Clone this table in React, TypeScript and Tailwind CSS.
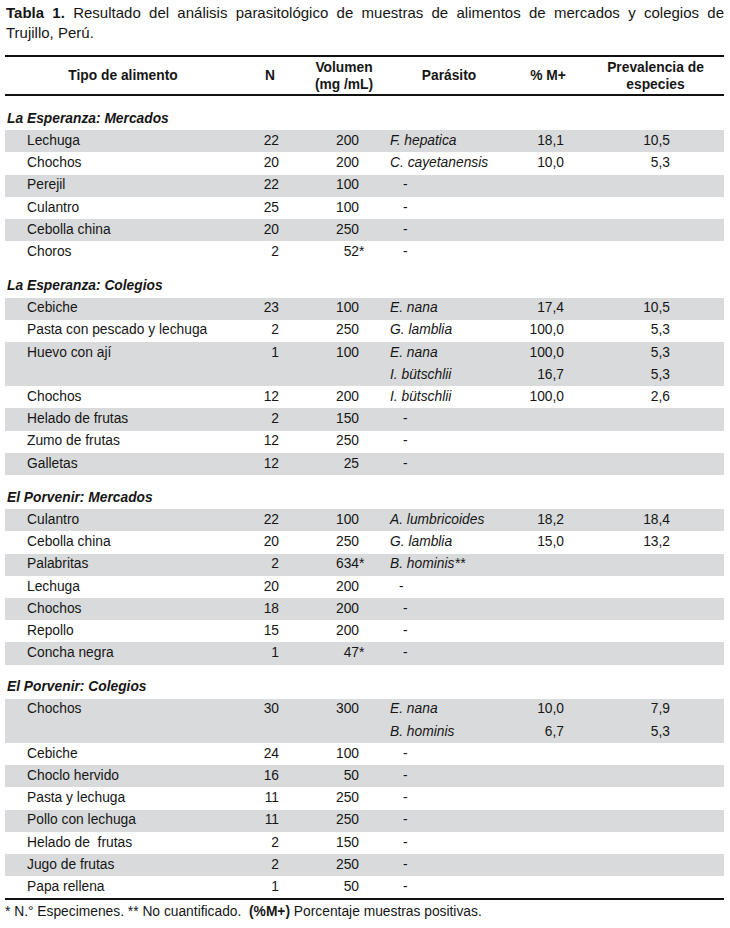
import React from "react";

type Line = [string, string?, string?];
type Row = { name: string; n: string; v: string; p: Line[]; dashShift?: boolean };
type Section = { title: string; rows: Row[] };

const sections: Section[] = [
  {
    title: "La Esperanza: Mercados",
    rows: [
      { name: "Lechuga", n: "22", v: "200", p: [["F. hepatica", "18,1", "10,5"]] },
      { name: "Chochos", n: "20", v: "200", p: [["C. cayetanensis", "10,0", "5,3"]] },
      { name: "Perejil", n: "22", v: "100", p: [["-"]] },
      { name: "Culantro", n: "25", v: "100", p: [["-"]] },
      { name: "Cebolla china", n: "20", v: "250", p: [["-"]] },
      { name: "Choros", n: "2", v: "52*", p: [["-"]] },
    ],
  },
  {
    title: "La Esperanza: Colegios",
    rows: [
      { name: "Cebiche", n: "23", v: "100", p: [["E. nana", "17,4", "10,5"]] },
      { name: "Pasta con pescado y lechuga", n: "2", v: "250", p: [["G. lamblia", "100,0", "5,3"]] },
      {
        name: "Huevo con ají",
        n: "1",
        v: "100",
        p: [
          ["E. nana", "100,0", "5,3"],
          ["I. bütschlii", "16,7", "5,3"],
        ],
      },
      { name: "Chochos", n: "12", v: "200", p: [["I. bütschlii", "100,0", "2,6"]] },
      { name: "Helado de frutas", n: "2", v: "150", p: [["-"]] },
      { name: "Zumo de frutas", n: "12", v: "250", p: [["-"]] },
      { name: "Galletas", n: "12", v: "25", p: [["-"]] },
    ],
  },
  {
    title: "El Porvenir: Mercados",
    rows: [
      { name: "Culantro", n: "22", v: "100", p: [["A. lumbricoides", "18,2", "18,4"]] },
      { name: "Cebolla china", n: "20", v: "250", p: [["G. lamblia", "15,0", "13,2"]] },
      { name: "Palabritas", n: "2", v: "634*", p: [["B. hominis**"]] },
      { name: "Lechuga", n: "20", v: "200", p: [["-"]], dashShift: true },
      { name: "Chochos", n: "18", v: "200", p: [["-"]] },
      { name: "Repollo", n: "15", v: "200", p: [["-"]] },
      { name: "Concha negra", n: "1", v: "47*", p: [["-"]] },
    ],
  },
  {
    title: "El Porvenir: Colegios",
    rows: [
      {
        name: "Chochos",
        n: "30",
        v: "300",
        p: [
          ["E. nana", "10,0", "7,9"],
          ["B. hominis", "6,7", "5,3"],
        ],
      },
      { name: "Cebiche", n: "24", v: "100", p: [["-"]] },
      { name: "Choclo hervido", n: "16", v: "50", p: [["-"]] },
      { name: "Pasta y lechuga", n: "11", v: "250", p: [["-"]] },
      { name: "Pollo con lechuga", n: "11", v: "250", p: [["-"]] },
      { name: "Helado de  frutas", n: "2", v: "150", p: [["-"]] },
      { name: "Jugo de frutas", n: "2", v: "250", p: [["-"]] },
      { name: "Papa rellena", n: "1", v: "50", p: [["-"]] },
    ],
  },
];

function Vol({ v }: { v: string }) {
  if (v.endsWith("*")) {
    return (
      <span>
        {v.slice(0, -1)}
        <span className="inline-block w-0">*</span>
      </span>
    );
  }
  return <span>{v}</span>;
}

function DataRow({ row, gray }: { row: Row; gray: boolean }) {
  return (
    <div
      className={`grid grid-cols-[236px_43px_86px_110px_100px_144px] ${
        gray ? "bg-[#d9dadb]" : ""
      }`}
    >
      <div className="h-[22.2px] flex items-center pl-[22px] whitespace-pre">{row.name}</div>
      <div className="h-[22.2px] flex items-center justify-end pr-[5px]">{row.n}</div>
      <div className="h-[22.2px] flex items-center justify-end pr-[11px]">
        <Vol v={row.v} />
      </div>
      <div className="flex flex-col">
        {row.p.map((l, i) =>
          l[0] === "-" ? (
            <div
              key={i}
              className={`h-[22.2px] flex items-center ${row.dashShift ? "pl-[29px]" : "pl-[33px]"}`}
            >
              -
            </div>
          ) : (
            <div key={i} className="h-[22.2px] flex items-center pl-[20px] italic whitespace-nowrap">
              {l[0]}
            </div>
          )
        )}
      </div>
      <div className="flex flex-col">
        {row.p.map((l, i) => (
          <div key={i} className="h-[22.2px] flex items-center justify-end pr-[16px]">
            {l[1] ?? ""}
          </div>
        ))}
      </div>
      <div className="flex flex-col">
        {row.p.map((l, i) => (
          <div key={i} className="h-[22.2px] flex items-center justify-end pr-[54px]">
            {l[2] ?? ""}
          </div>
        ))}
      </div>
    </div>
  );
}

export default function App() {
  return (
    <div className="w-[730px] h-[928px] bg-white text-[#161616] font-['Liberation_Sans',Arial,sans-serif] overflow-hidden">
      <div className="pt-[3px] pl-[6px] w-[724px] text-[15px] leading-[20px]">
        <div className="[text-align-last:justify] whitespace-nowrap">
          <span className="font-bold">Tabla 1.</span> Resultado del análisis parasitológico de muestras de alimentos de mercados y colegios de
        </div>
        <div>Trujillo, Perú.</div>
      </div>

      <div className="ml-[5px] w-[719px] mt-[12px] text-[13.8px]">
        <div className="border-t-2 border-b-2 border-[#111] h-[41px] grid grid-cols-[236px_58px_90px_120px_78px_137px] font-bold leading-[17px]">
          <div className="flex items-center justify-center whitespace-nowrap">Tipo de alimento</div>
          <div className="flex items-center justify-center">N</div>
          <div className="flex flex-col items-center justify-center whitespace-nowrap">
            <span>Volumen</span>
            <span>(mg /mL)</span>
          </div>
          <div className="flex items-center justify-center">Parásito</div>
          <div className="flex items-center justify-center whitespace-nowrap">% M+</div>
          <div className="flex flex-col items-center justify-center whitespace-nowrap">
            <span>Prevalencia de</span>
            <span>especies</span>
          </div>
        </div>

        {sections.map((s, si) => (
          <div key={si} className="pt-[12px]">
            <div className="h-[22.2px] flex items-center pl-[2px] font-bold italic">{s.title}</div>
            {s.rows.map((r, ri) => (
              <DataRow key={ri} row={r} gray={ri % 2 === 0} />
            ))}
          </div>
        ))}

        <div className="border-t-2 border-[#111]" />
        <div className="h-[24px] flex items-center whitespace-pre">
          * N.° Especimenes. ** No cuantificado.  <span className="font-bold">(%M+)</span> Porcentaje muestras positivas.
        </div>
      </div>
    </div>
  );
}
